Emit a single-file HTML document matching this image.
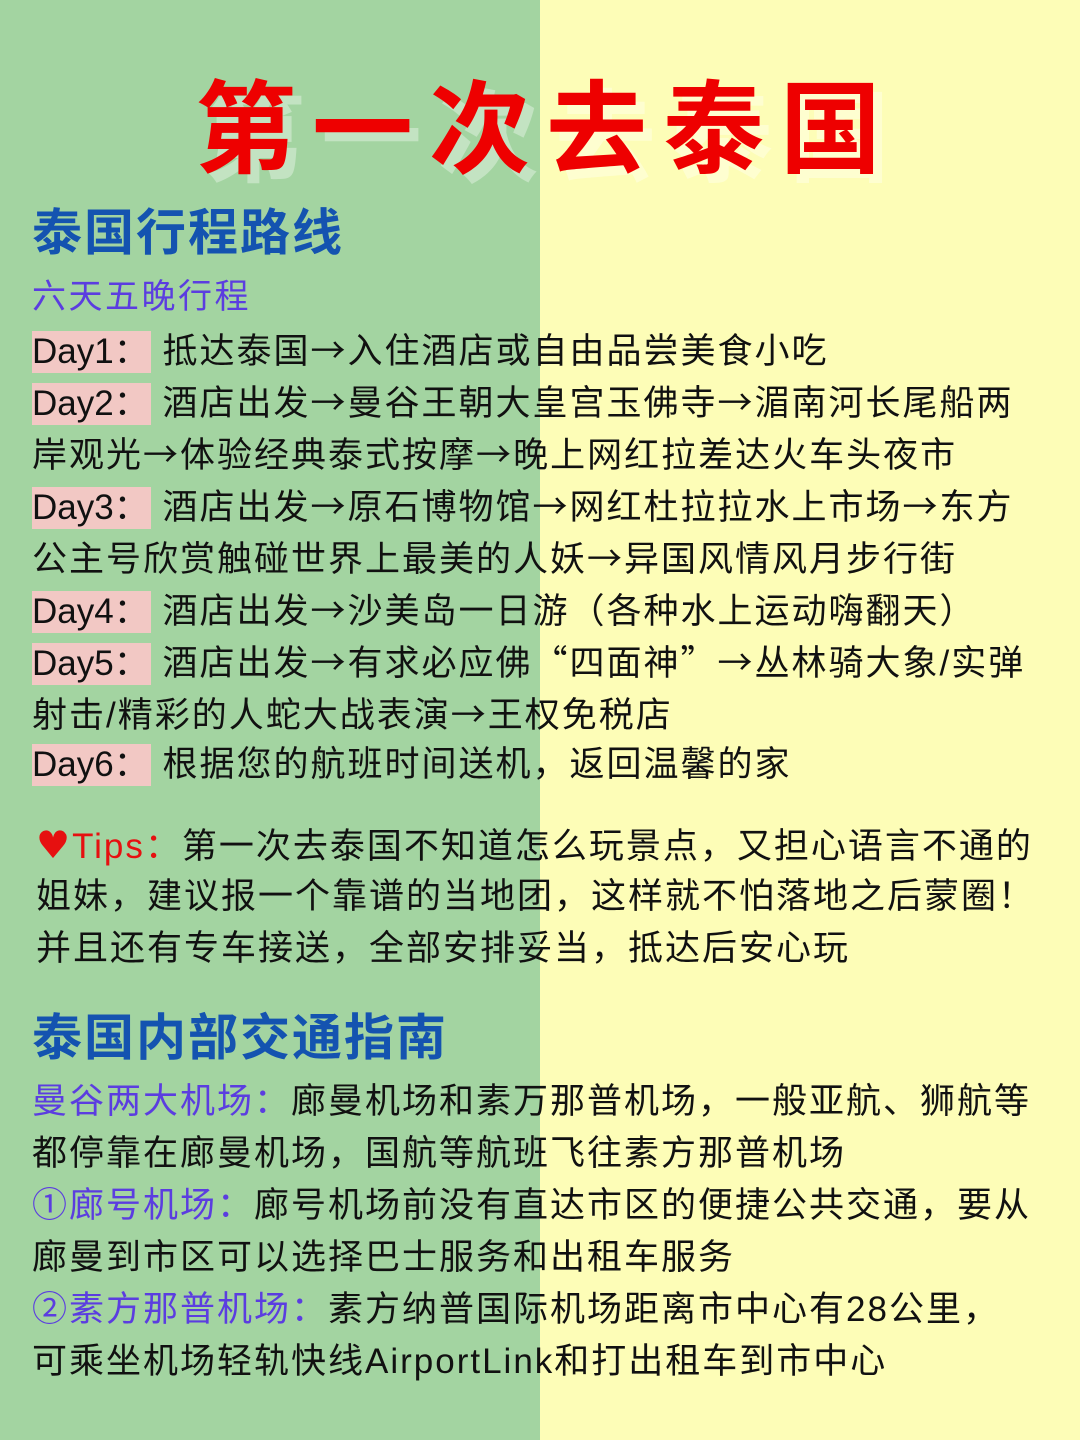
<!DOCTYPE html>
<html><head><meta charset="utf-8"><style>
body{margin:0;width:1080px;height:1440px;position:relative;overflow:hidden;font-family:"Liberation Sans","Noto Sans CJK SC",sans-serif;background:linear-gradient(90deg,#a3d4a1 0,#a3d4a1 540px,#fdfdb7 540px);}
.l{position:absolute;left:32px;white-space:nowrap;font-size:35px;line-height:52px;letter-spacing:2px;color:#111;}
.d{background:#f2c8c4;display:inline-block;line-height:42px;letter-spacing:0;padding-right:2px;}
.t{position:absolute;left:195px;top:60px;font-size:101px;line-height:124px;font-weight:bold;color:#ee0000;letter-spacing:16px;white-space:nowrap;text-shadow:9px 9px 0 rgba(255,255,255,.35);font-family:"Noto Sans CJK SC",sans-serif;}
.h{position:absolute;left:32px;font-size:50px;line-height:64px;letter-spacing:2px;color:#1453b0;font-weight:bold;white-space:nowrap;}
.p{color:#5b3de0}
.r{color:#e61010}
.a{font-family:"Noto Sans CJK SC",sans-serif;}
.hr{font-family:"DejaVu Sans",sans-serif;font-size:38px;}
</style></head><body>
<div class="t">第一次去泰国</div>
<div class="h" style="top:201px">泰国行程路线</div>
<div class="l p" style="top:271px;letter-spacing:2.5px;font-size:34px">六天五晚行程</div>
<div class="l" style="top:323px"><span class="d">Day1：</span> 抵达泰国<span class="a">→</span>入住酒店或自由品尝美食小吃</div>
<div class="l" style="top:375px"><span class="d">Day2：</span> 酒店出发<span class="a">→</span>曼谷王朝大皇宫玉佛寺<span class="a">→</span>湄南河长尾船两</div>
<div class="l" style="top:427px">岸观光<span class="a">→</span>体验经典泰式按摩<span class="a">→</span>晚上网红拉差达火车头夜市</div>
<div class="l" style="top:479px"><span class="d">Day3：</span> 酒店出发<span class="a">→</span>原石博物馆<span class="a">→</span>网红杜拉拉水上市场<span class="a">→</span>东方</div>
<div class="l" style="top:531px">公主号欣赏触碰世界上最美的人妖<span class="a">→</span>异国风情风月步行街</div>
<div class="l" style="top:583px"><span class="d">Day4：</span> 酒店出发<span class="a">→</span>沙美岛一日游（各种水上运动嗨翻天）</div>
<div class="l" style="top:635px"><span class="d">Day5：</span> 酒店出发<span class="a">→</span>有求必应佛<span class="a">“</span>四面神<span class="a">”→</span>丛林骑大象/实弹</div>
<div class="l" style="top:687px">射击/精彩的人蛇大战表演<span class="a">→</span>王权免税店</div>
<div class="l" style="top:739px"><span class="d">Day6：</span> 根据您的航班时间送机，返回温馨的家</div>
<div class="l" style="top:819px;left:36px"><span class="r"><span class="hr">♥</span>Tips：</span>第一次去泰国不知道怎么玩景点，又担心语言不通的</div>
<div class="l" style="top:871px;left:36px">姐妹，建议报一个靠谱的当地团，这样就不怕落地之后蒙圈！</div>
<div class="l" style="top:923px;left:36px">并且还有专车接送，全部安排妥当，抵达后安心玩</div>
<div class="h" style="top:1006px">泰国内部交通指南</div>
<div class="l" style="top:1076px"><span class="p">曼谷两大机场：</span>廊曼机场和素万那普机场，一般亚航、狮航等</div>
<div class="l" style="top:1128px">都停靠在廊曼机场，国航等航班飞往素方那普机场</div>
<div class="l" style="top:1180px"><span class="p">①廊号机场：</span>廊号机场前没有直达市区的便捷公共交通，要从</div>
<div class="l" style="top:1232px">廊曼到市区可以选择巴士服务和出租车服务</div>
<div class="l" style="top:1284px"><span class="p">②素方那普机场：</span>素方纳普国际机场距离市中心有28公里，</div>
<div class="l" style="top:1336px">可乘坐机场轻轨快线AirportLink和打出租车到市中心</div>
</body></html>
